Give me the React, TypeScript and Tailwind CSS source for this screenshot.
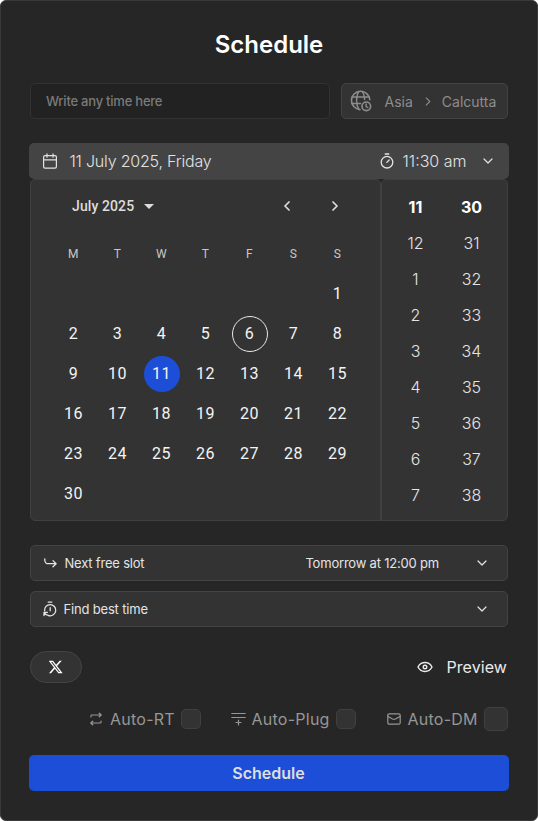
import React from "react";

const inter = "font-['Inter','Liberation_Sans',sans-serif]";
const roboto = "font-['Roboto','Liberation_Sans',sans-serif]";

type IconProps = { className?: string; children: React.ReactNode; box: string; stroke?: number };

function Icon({ className = "", children, box, stroke = 1.1 }: IconProps) {
  return (
    <svg viewBox={box} className={`shrink-0 ${className}`} fill="none" stroke="currentColor" strokeWidth={stroke} strokeLinecap="round" strokeLinejoin="round">
      {children}
    </svg>
  );
}

function ChevronDown({ className = "" }: { className?: string }) {
  return (
    <Icon box="0 0 12 12" stroke={1.2} className={`h-3 w-3 ${className}`}>
      <path d="M2 4 6 8 10 4" />
    </Icon>
  );
}

function GlobeClock() {
  return (
    <Icon box="0 0 22 22" stroke={1.6} className="h-[22px] w-[22px]">
      <path d="M9.9 19.6A9.2 9.2 0 1 1 19.8 9.6" />
      <path d="M8.8 19.2C7.4 17.2 6.6 14 6.6 10.4s.8-7 2.2-9M12.2 1.4c1.6 2 2.300 5 2.400 8.200M2.200 7h16.800M1.800 13.500h8.800" strokeWidth={1.4} />
      <circle cx="16.300" cy="16.300" r="4.300" />
      <path d="M16.100 14v2.600l1.700.9" strokeWidth={1.4} />
    </Icon>
  );
}

function CalendarIcon() {
  return (
    <Icon box="0 0 14 16" stroke={1.2} className="h-4 w-[14px]">
      <rect x=".6" y="2.6" width="12.8" height="12.6" rx="1.4" />
      <path d="M.6 6.9h12.800M4 .8v3.400M10 .8v3.400" />
    </Icon>
  );
}

function Stopwatch() {
  return (
    <Icon box="0 0 14 16" stroke={1.3} className="h-4 w-[14px]">
      <circle cx="7" cy="9.2" r="5.8" />
      <path d="M5.2 1h3.6M6.8 9.4 9.2 7" />
    </Icon>
  );
}

function BestTimeIcon() {
  return (
    <Icon box="0 0 14 16" stroke={1.3} className="h-4 w-[14px]">
      <path d="M1.600 9.800A5.600 5.600 0 1 1 5.800 14.600M5.200 1.100h3.600M7.200 6.600v3.200" />
      <path d="M1 14.600v-3.200h3.400M1.200 11.600c.8 1.400 2.200 2.700 4.600 3" />
    </Icon>
  );
}

const weekdays = ["M", "T", "W", "T", "F", "S", "S"];
const days: (number | null)[] = [...Array(6).fill(null), ...Array.from({ length: 30 }, (_, i) => i + 1)];
const hours = [11, 12, 1, 2, 3, 4, 5, 6, 7];
const minutes = [30, 31, 32, 33, 34, 35, 36, 37, 38];

function Day({ day }: { day: number | null }) {
  const state = day === 11 ? "bg-[#1d4ed8]" : day === 6 ? "border border-[#e8e8e8]" : "";
  return (
    <div className="flex h-10 items-center justify-center">
      {day && <span className={`flex h-9 w-9 items-center justify-center rounded-full ${state}`}>{day}</span>}
    </div>
  );
}

function TimeColumn({ values }: { values: number[] }) {
  return (
    <div className="w-14 text-center text-base leading-9 font-light text-[#e4e4e4]">
      {values.map((v, i) => (
        <div key={v} className={i === 0 ? "font-bold text-white" : ""}>{v}</div>
      ))}
    </div>
  );
}

function Check({ className }: { className: string }) {
  return <span className={`shrink-0 border border-[#404040] bg-[#333333] ${className}`} />;
}

export default function App() {
  return (
    <div className="h-[821px] w-[538px] bg-white">
      <main className={`h-full rounded-md border border-[#393939] bg-[#262626] px-[29px] pt-7 ${inter}`}>
        <h1 className="text-center text-2xl leading-8 font-semibold text-white">Schedule</h1>

        <div className="mt-[22px] flex h-9 w-[478px] justify-between">
          <div className="flex w-[300px] items-center rounded-[5px] border border-[#333333] bg-[#222222] pt-0.5 pl-[15px] text-[13px] font-medium tracking-[-0.23px] text-[#7a7a7a]">
            Write any time here
          </div>
          <div className="flex w-[167px] items-center rounded-[5px] border border-[#434343] bg-[#333333] pl-2 text-sm text-[#8d8d8d]">
            <GlobeClock />
            <span className="ml-[12.5px] pt-px">Asia</span>
            <Icon box="0 0 6 10" stroke={1.2} className="ml-3 h-[9px] w-[6px]"><path d="M1 1l4 4-4 4" /></Icon>
            <span className="ml-[11px] pt-px">Calcutta</span>
          </div>
        </div>

        <div className="-mx-px mt-6 flex h-9 w-[480px] items-center rounded-[5px] bg-[#444444] px-[14px] text-base font-light text-[#e2e2e2]">
          <CalendarIcon />
          <span className="ml-[12.5px] tracking-[-0.2px]">11 July 2025, Friday</span>
          <span className="ml-auto"><Stopwatch /></span>
          <span className="ml-[9px]">11:30 am</span>
          <ChevronDown className="mr-px ml-[15.5px]" />
        </div>

        <div className="flex h-[342px] w-[478px]">
          <section className={`w-[351px] rounded-[5px] rounded-br-none border border-[#404040] bg-[#333333] pt-[6px] pr-5 pl-[20.5px] ${roboto}`}>
            <div className="flex h-10 items-center pl-[20.5px] text-sm font-medium tracking-[0.1px] text-[#dddddd]">
              July 2025
              <svg viewBox="0 0 10 5" className="ml-[10px] h-[5px] w-[10px] fill-current"><path d="M0 0h10L5 5z" /></svg>
              <Icon box="0 0 6 10" stroke={1.7} className="ml-[130px] h-[10px] w-[6px]"><path d="M5 1 1 5l4 4" /></Icon>
              <Icon box="0 0 6 10" stroke={1.7} className="ml-[42px] h-[10px] w-[6px]"><path d="M1 1l4 4-4 4" /></Icon>
            </div>
            <div className="mt-2 grid w-[308px] grid-cols-7 text-center text-xs leading-10 tracking-[0.4px] text-[#c8c8c8]">
              {weekdays.map((d, i) => <span key={i}>{d}</span>)}
            </div>
            <div className="grid w-[308px] grid-cols-7 text-base tracking-[0.5px] text-[#f4f4f4]">
              {days.map((d, i) => <Day key={i} day={d} />)}
            </div>
          </section>
          <section className="flex w-[127px] rounded-[5px] rounded-bl-none border border-[#404040] bg-[#333333] pt-[9px] pl-[5.5px]">
            <TimeColumn values={hours} />
            <TimeColumn values={minutes} />
          </section>
        </div>

        <div className="mt-6 flex h-9 w-[478px] items-center rounded-[5px] border border-[#434343] bg-[#333333] pr-[19px] pl-[13px] text-[13px] tracking-[-0.2px] text-[#e4e4e4]">
          <Icon box="0 0 13 10" stroke={1.3} className="h-[10px] w-[13px]"><path d="M.8.8v1.4a3.5 3.5 0 0 0 3.5 3.5h7.8M9 2.6l3.1 3.1L9 8.800" /></Icon>
          <span className="ml-[7.5px] pt-0.5">Next free slot</span>
          <span className="ml-auto pt-0.5">Tomorrow at 12:00 pm</span>
          <ChevronDown className="ml-[37px]" />
        </div>
        <div className="mt-[10px] flex h-9 w-[478px] items-center rounded-[5px] border border-[#434343] bg-[#333333] pr-[19px] pl-[11.5px] text-[13px] tracking-[-0.18px] text-[#e4e4e4]">
          <BestTimeIcon />
          <span className="ml-[7px] pt-0.5">Find best time</span>
          <ChevronDown className="ml-auto" />
        </div>

        <div className="mt-6 flex h-8 w-[478px] items-center pr-px text-base text-[#ebebeb]">
          <span className="flex h-8 w-[52px] items-center justify-center rounded-full border border-[#434343] bg-[#333333] text-white">
            <svg viewBox="0 0 24 24" className="h-[14px] w-[14px] fill-current"><path d="M18.244 1.25h3.68l-8.04 9.19L23.344 22.75h-7.406l-5.8-7.584-6.638 7.584H-.18l8.6-9.83L-.656 1.25h7.594l5.243 6.932zm-1.29 19.33h2.039L5.796 3.32H3.608z" /></svg>
          </span>
          <Icon box="0 0 16 12" stroke={1.4} className="ml-auto h-3 w-4">
            <path d="M1 6c1.500-3 4-4.500 7-4.500S13.500 3 15 6c-1.500 3-4 4.500-7 4.500S2.500 9 1 6z" />
            <circle cx="8" cy="6" r="1.800" />
          </Icon>
          <span className="ml-[13.5px] tracking-[0.08px]">Preview</span>
        </div>

        <div className="mt-6 flex h-6 w-[478px] items-center pl-[60px] text-base tracking-[0.25px] text-[#969696]">
          <Icon box="0 0 12 14" stroke={1.2} className="h-[14px] w-3">
            <path d="M1 5V3.800Q1 3 1.800 3H11M9.300 1.200 11.200 3 9.300 4.800M11 9v1.200q0 .8-.8.8H1M2.700 9.200.8 11l1.900 1.800" />
          </Icon>
          <span className="ml-[8px] w-[64px] whitespace-nowrap">Auto-RT</span>
          <Check className="ml-[7px] h-5 w-5 rounded-[5px]" />
          <Icon box="0 0 15 14" stroke={1.2} className="ml-[30px] h-[14px] w-[15px]">
            <path d="M.8 1.500h13.400M.8 5.500h13.400M7.500 8v5M5 10.500h5" />
          </Icon>
          <span className="ml-[5.5px] w-[77.5px] whitespace-nowrap">Auto-Plug</span>
          <Check className="ml-[7px] h-5 w-5 rounded-[5px]" />
          <Icon box="0 0 14 12" stroke={1.2} className="ml-[30.5px] h-3 w-[14px]">
            <rect x=".8" y=".8" width="12.400" height="10.400" rx="1.500" />
            <path d="M1 3.500 5.600 6q1.400.7 2.800 0L13 3.500" />
          </Icon>
          <span className="ml-[7px]">Auto-DM</span>
          <Check className="ml-auto h-6 w-6 rounded-[5px]" />
        </div>

        <button className="-ml-px mt-6 flex h-9 w-[480px] items-center justify-center rounded-[5px] bg-[#1d4ed8] pr-px text-base font-semibold text-[#dedede]">
          Schedule
        </button>
      </main>
    </div>
  );
}
